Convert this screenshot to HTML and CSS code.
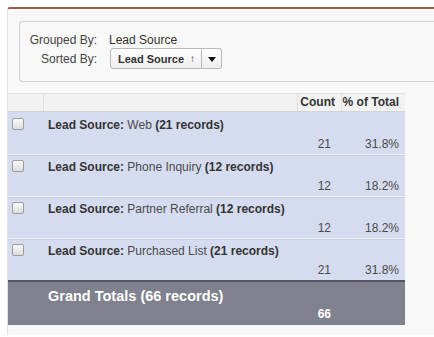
FILE: index.html
```html
<!DOCTYPE html>
<html>
<head>
<meta charset="utf-8">
<link rel="stylesheet" href="styles.css">
</head>
<body>
<div class="panel">
  <div class="filters">
    <div class="frow">
      <span class="flabel">Grouped By:</span>
      <span class="fvalue">Lead Source</span>
    </div>
    <div class="frow">
      <span class="flabel">Sorted By:</span>
      <div class="sortbtn">
        <span class="sortmain">Lead Source <span class="arrow">&#8593;</span></span>
        <span class="sortdrop"><span class="tri"></span></span>
      </div>
    </div>
  </div>

  <div class="report">
    <div class="hdr">
      <div class="hc"></div>
      <div class="hc"></div>
      <div class="hc num">Count</div>
      <div class="hc num">% of Total</div>
    </div>
    <div class="grp">
      <div class="cb"><span class="box"></span></div>
      <div class="lbl"><b>Lead Source:</b> Web <b>(21 records)</b></div>
      <div class="cnt">21</div>
      <div class="pct">31.8%</div>
    </div>
    <div class="grp">
      <div class="cb"><span class="box"></span></div>
      <div class="lbl"><b>Lead Source:</b> Phone Inquiry <b>(12 records)</b></div>
      <div class="cnt">12</div>
      <div class="pct">18.2%</div>
    </div>
    <div class="grp">
      <div class="cb"><span class="box"></span></div>
      <div class="lbl"><b>Lead Source:</b> Partner Referral <b>(12 records)</b></div>
      <div class="cnt">12</div>
      <div class="pct">18.2%</div>
    </div>
    <div class="grp">
      <div class="cb"><span class="box"></span></div>
      <div class="lbl"><b>Lead Source:</b> Purchased List <b>(21 records)</b></div>
      <div class="cnt">21</div>
      <div class="pct">31.8%</div>
    </div>
    <div class="total">
      <div class="tlbl">Grand Totals (66 records)</div>
      <div class="tcnt">66</div>
    </div>
  </div>
</div>
</body>
</html>
```

FILE: styles.css
```css
html, body {
  margin: 0;
  padding: 0;
  background: #ffffff;
  font-family: Arial, "Liberation Sans", sans-serif;
  font-size: 12px;
  color: #333;
}

.panel {
  margin: 7px 0 0 7px;
  border-top: 2px solid #9e5a4b;
  border-left: 1px solid #e4e4e4;
  border-top-left-radius: 3px;
  background: #f8f8f8;
  height: 328px;
  padding-top: 12px;
  box-sizing: border-box;
}

.filters {
  margin-left: 11px;
  border: 1px solid #cfcfcf;
  border-right: none;
  border-radius: 4px 0 0 4px;
  background: #f8f8f8;
  height: 61px;
  box-sizing: border-box;
  padding-top: 11px;
  display: flex;
  flex-direction: column;
  gap: 1px;
}

.frow {
  display: grid;
  grid-template-columns: 77px auto;
  column-gap: 12px;
  align-items: center;
}

.flabel {
  text-align: right;
  color: #444;
  line-height: 14px;
  white-space: nowrap;
}

.fvalue {
  color: #333;
  line-height: 14px;
  white-space: nowrap;
}

.sortbtn {
  display: flex;
  height: 21px;
  justify-self: start;
  margin-left: 1px;
}

.sortmain {
  display: flex;
  align-items: center;
  flex: 0 0 92px;
  box-sizing: border-box;
  padding-left: 7px;
  border: 1px solid #b9b9b9;
  border-radius: 3px 0 0 3px;
  background: linear-gradient(#ffffff, #ededed);
  font-weight: bold;
  font-size: 11px;
  color: #333;
  white-space: nowrap;
}

.arrow {
  font-weight: normal;
  font-size: 10px;
  margin-left: 6px;
}

.sortdrop {
  flex: 0 0 20px;
  box-sizing: border-box;
  border: 1px solid #b9b9b9;
  border-left: none;
  border-radius: 0 3px 3px 0;
  background: linear-gradient(#ffffff, #ededed);
  display: flex;
  align-items: center;
  justify-content: center;
}

.tri {
  width: 0;
  height: 0;
  border-left: 4px solid transparent;
  border-right: 4px solid transparent;
  border-top: 5px solid #111;
  margin-top: 1px;
}

.report {
  margin-top: 11px;
  width: 397px;
}

.hdr {
  display: grid;
  grid-template-columns: 35px 254px 44px 64px;
  height: 19px;
  background: #f2f2f2;
  border-top: 1px solid #e2e2e2;
  border-bottom: 1px solid #d4d4d4;
  box-sizing: border-box;
}

.hc {
  border-left: 1px solid #e0e0e0;
  font-weight: bold;
  color: #333;
  line-height: 17px;
  padding-right: 6px;
}

.hc:first-child {
  border-left: none;
}

.num {
  text-align: right;
}

.grp {
  display: grid;
  grid-template-columns: 35px 254px 44px 64px;
  grid-template-rows: 14px 14px;
  row-gap: 5px;
  height: 42px;
  box-sizing: border-box;
  padding-top: 5px;
  background: #d6dcef;
  border-top: 1px solid #eef0f8;
  box-shadow: inset 0 1px 0 #c9cee0;
}

.grp:nth-child(2) {
  border-top: none;
  box-shadow: none;
  padding-top: 6px;
}

.cb {
  grid-row: 1 / span 2;
  grid-column: 1;
  padding-left: 4px;
}

.box {
  display: block;
  width: 12px;
  height: 12px;
  box-sizing: border-box;
  border: 1px solid #9c9c9c;
  border-radius: 2px;
  background: linear-gradient(#fbfbfb, #dcdcdc);
}

.lbl {
  grid-row: 1;
  grid-column: 2 / span 3;
  padding-left: 5px;
  line-height: 14px;
  color: #4a4a4a;
  white-space: nowrap;
}

.lbl b {
  color: #333;
}

.cnt, .pct {
  grid-row: 2;
  text-align: right;
  line-height: 14px;
  color: #4a4a4a;
}

.cnt {
  grid-column: 3;
  padding-right: 10px;
}

.pct {
  grid-column: 4;
  padding-right: 6px;
}

.total {
  display: grid;
  grid-template-columns: 35px 254px 44px 64px;
  grid-template-rows: 18px 14px;
  row-gap: 2px;
  height: 45px;
  box-sizing: border-box;
  padding-top: 5px;
  background: #7f818e;
  border-top: 2px solid #55565f;
  color: #fff;
  font-weight: bold;
}

.tlbl {
  grid-column: 2 / span 3;
  grid-row: 1;
  padding-left: 5px;
  font-size: 14.5px;
  line-height: 18px;
  white-space: nowrap;
}

.tcnt {
  grid-column: 3;
  grid-row: 2;
  text-align: right;
  padding-right: 10px;
  line-height: 14px;
}
```
